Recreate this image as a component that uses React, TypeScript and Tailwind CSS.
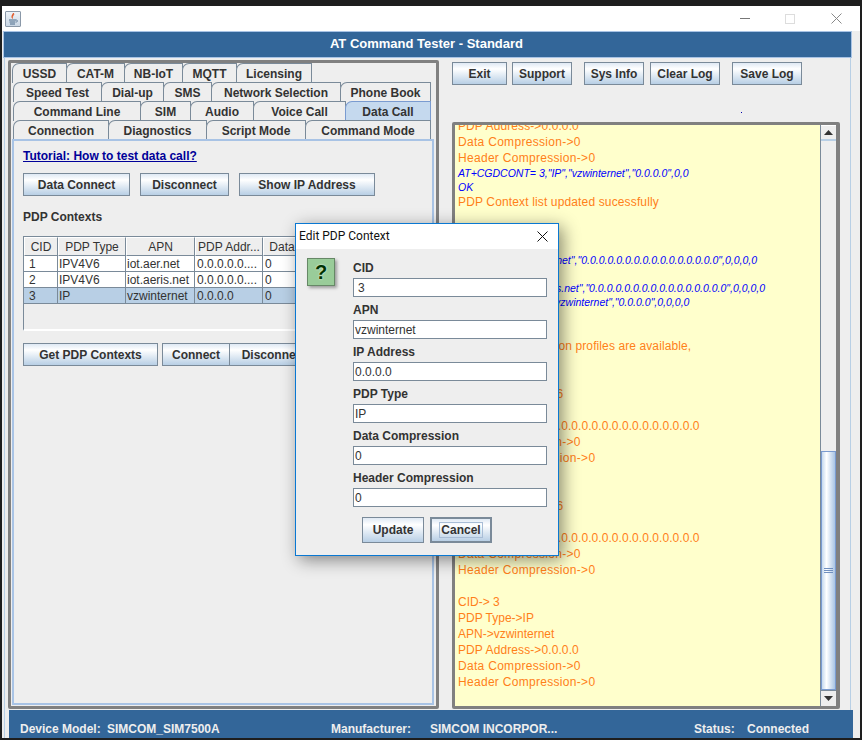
import React from "react";

const btn =
  "h-[23px] shrink-0 flex items-center justify-center border border-[#7a8a99] bg-[linear-gradient(180deg,#dfe9f4_0%,#ffffff_28%,#b8cfe5_100%)] text-[12px] font-bold text-[#333333]";

function Btn({ w, children, className = "" }: { w: string; children: React.ReactNode; className?: string }) {
  return <div className={`${btn} ${w} ${className}`}>{children}</div>;
}

function Tab({ w, label, active }: { w: number; label: string; active?: boolean }) {
  return (
    <div
      style={{ width: w }}
      className={`h-[20px] -mr-px shrink-0 flex items-center justify-center rounded-tl-[7px] border border-b-0 text-[12px] font-bold text-[#333333] ${
        active ? "bg-[#c5d9ee] border-[#7a9bd0]" : "bg-[#eeeeee] border-[#7a8a99]"
      }`}
    >
      {label}
    </div>
  );
}

const rows: { l: number; items: [string, number, boolean?][] }[] = [
  { l: 0, items: [["USSD", 54], ["CAT-M", 58], ["NB-IoT", 58], ["MQTT", 54], ["Licensing", 75]] },
  { l: 1, items: [["Speed Test", 88], ["Dial-up", 62], ["SMS", 48], ["Network Selection", 129], ["Phone Book", 90]] },
  { l: 1, items: [["Command Line", 127], ["SIM", 50], ["Audio", 63], ["Voice Call", 92], ["Data Call", 85, true]] },
  { l: 1, items: [["Connection", 95], ["Diagnostics", 98], ["Script Mode", 99], ["Command Mode", 125]] },
];

const cols = [
  { w: "w-[34px]", h: "CID", v: ["1", "2", "3"], p: "pl-[5px]" },
  { w: "w-[68px]", h: "PDP Type", v: ["IPV4V6", "IPV4V6", "IP"], p: "pl-[1px]" },
  { w: "w-[69px]", h: "APN", v: ["iot.aer.net", "iot.aeris.net", "vzwinternet"], p: "pl-[1px]" },
  { w: "w-[68px]", h: "PDP Addr...", v: ["0.0.0.0.0....", "0.0.0.0.0....", "0.0.0.0"], p: "pl-[2px]" },
  { w: "w-[38px]", h: "Data", v: ["0", "0", "0"], p: "pl-[2px]" },
  { w: "w-[68px]", h: "Header", v: ["0", "0", "0"], p: "pl-[2px]" },
  { w: "flex-1", h: "", v: ["", "", ""], p: "" },
];

function Table() {
  return (
    <div className="mt-[11px] mr-[9px] h-[95px] flex flex-col border-l border-t border-[#7a8a99] border-b-2 border-b-[#ffffff] bg-[#eeeeee]">
      <div className="h-[19px] shrink-0 flex">
        {cols.map((c) => (
          <div
            key={c.h}
            className={`${c.w} shrink-0 flex items-center justify-center border-r border-b border-[#7a8a99] border-t border-l border-t-[#ffffff] border-l-[#ffffff] text-[12px] text-[#333333]`}
          >
            {c.h}
          </div>
        ))}
      </div>
      {[0, 1, 2].map((j) => (
        <div key={j} className={`h-[16px] shrink-0 flex border-b border-[#7a8a99] ${j === 2 ? "bg-[#b8cfe5]" : "bg-[#ffffff]"}`}>
          {cols.map((c) => (
            <div
              key={c.h}
              className={`${c.w} shrink-0 flex items-center whitespace-nowrap overflow-hidden border-r border-[#7a8a99] text-[12px] text-[#333333] ${c.p}`}
            >
              {c.v[j]}
            </div>
          ))}
        </div>
      ))}
    </div>
  );
}

const O = ({ t, c = "" }: { t?: string; c?: string }) => (
  <div className={`h-[16px] leading-[16px] text-[12px] whitespace-nowrap text-[#ff8019] ${c}`}>{t}</div>
);
const B = ({ t, c = "" }: { t?: string; c?: string }) => (
  <div className={`h-[14px] leading-[14px] text-[10.5px] italic whitespace-nowrap text-[#0000ff] ${c}`}>{t}</div>
);

const ADDR = "0.0.0.0.0.0.0.0.0.0.0.0.0.0.0.0";
const WIDE = "tracking-[0.3px]";

function LogText() {
  return (
    <div className="flex-1 min-w-0 overflow-hidden pl-[3px] bg-[#ffffcc]">
      <div className="-mt-[7px]">
        <O t="PDP Address->0.0.0.0" c="tracking-[0.1px]" />
        <O t="Data Compression->0" c={WIDE} />
        <O t="Header Compression->0" c={WIDE} />
        <B t={'AT+CGDCONT= 3,"IP","vzwinternet","0.0.0.0",0,0'} />
        <B t="OK" />
        <O t="PDP Context list updated sucessfully" c="tracking-[0.14px]" />
        <div className="h-[43px]" />
        <B t={`1,"IPV4V6","iot.aer.net","${ADDR}",0,0,0,0`} c="pl-[8px]" />
        <B />
        <B t={`2,"IPV4V6","iot.aeris.net","${ADDR}",0,0,0,0`} c="pl-[8px]" />
        <B t={'+CGDCONT: 3,"IP","vzwinternet","0.0.0.0",0,0,0,0'} />
        <div className="h-[29px]" />
        <O t="Following connection profiles are available," c="tracking-[0.1px]" />
        <O />
        <O t="CID-> 1" />
        <O t="PDP Type->IPV4V6" />
        <O t="APN->iot.aer.net" />
        <O t={`PDP Address->${ADDR}`} c="tracking-[0.06px]" />
        <O t="Data Compression->0" c={WIDE} />
        <O t="Header Compression->0" c={WIDE} />
        <O />
        <O t="CID-> 2" />
        <O t="PDP Type->IPV4V6" />
        <O t="APN->iot.aeris.net" />
        <O t={`PDP Address->${ADDR}`} c="tracking-[0.06px]" />
        <O t="Data Compression->0" c={WIDE} />
        <O t="Header Compression->0" c={WIDE} />
        <O />
        <O t="CID-> 3" />
        <O t="PDP Type->IP" />
        <O t="APN->vzwinternet" />
        <O t="PDP Address->0.0.0.0" c="tracking-[0.1px]" />
        <O t="Data Compression->0" c={WIDE} />
        <O t="Header Compression->0" c={WIDE} />
      </div>
    </div>
  );
}

function Scrollbar() {
  return (
    <div className="w-[16px] shrink-0 flex flex-col border-l border-[#7a8a99] bg-[#eeeeee]">
      <div className="h-[16px] shrink-0 flex items-center justify-center border-b-2 border-[#b8cfe5] border-t border-t-[#ffffff]">
        <svg width="9" height="5" viewBox="0 0 9 5"><path d="M4.5 0 9 5H0z" fill="#333333" /></svg>
      </div>
      <div className="h-[310px] shrink-0" />
      <div className="flex-1 flex items-center justify-center border border-[#7a9bd0] bg-[linear-gradient(90deg,#c5d9ee_0%,#ffffff_35%,#a8c4e4_100%)]">
        <div className="flex flex-col gap-[1px]">
          <div className="w-[9px] h-px bg-[#6f8fc0]" />
          <div className="w-[9px] h-px bg-[#6f8fc0]" />
          <div className="w-[9px] h-px bg-[#6f8fc0]" />
        </div>
      </div>
      <div className="h-[16px] shrink-0 flex items-center justify-center border-t border-[#7a8a99]">
        <svg width="9" height="5" viewBox="0 0 9 5"><path d="M0 0h9L4.5 5z" fill="#333333" /></svg>
      </div>
    </div>
  );
}

function Field({ label, value, pad = "pl-[1px]" }: { label: string; value: string; pad?: string }) {
  return (
    <div className="flex flex-col">
      <div className="h-[23px] pt-[2px] flex items-center text-[12px] font-bold text-[#333333]">{label}</div>
      <div className={`h-[19px] flex items-center pt-px border border-[#7a8a99] bg-[#ffffff] text-[12px] text-[#333333] ${pad}`}>
        {value}
      </div>
    </div>
  );
}

function Dialog() {
  return (
    <div className="absolute left-[295px] top-[223px] w-[264px] h-[333px] flex flex-col border border-[#0a78d2] bg-[#eeeeee] shadow-[4px_4px_16px_rgba(0,0,0,0.45)]">
      <div className="h-[25px] shrink-0 flex items-center justify-between bg-[#ffffff] pl-[3px] pr-[10px] pb-px">
        <span className="text-[12px] text-[#111111] font-['Roboto',sans-serif]">Edit PDP Context</span>
        <svg width="11" height="11" viewBox="0 0 11 11" fill="none" stroke="#111111" strokeWidth="1">
          <path d="M0.5 0.5l10 10M10.5 0.5l-10 10" />
        </svg>
      </div>
      <div className="flex pl-[11px]">
        <div className="mt-[9px] w-[28px] h-[28px] shrink-0 flex items-center justify-center border border-[#668866] bg-[#99cc99] shadow-[2px_2px_3px_rgba(0,0,0,0.35)]">
          <span className="text-[20px] leading-[20px] font-black text-[#003300] [text-shadow:0_0_2px_#ffffff]">?</span>
        </div>
        <div className="ml-[18px] w-[194px] flex flex-col mt-[6px]">
          <Field label="CID" value="3" pad="pl-[4px]" />
          <Field label="APN" value="vzwinternet" />
          <Field label="IP Address" value="0.0.0.0" />
          <Field label="PDP Type" value="IP" />
          <Field label="Data Compression" value="0" />
          <Field label="Header Compression" value="0" />
        </div>
      </div>
      <div className="mt-[10px] flex pl-[66px] gap-[6px]">
        <Btn w="w-[62px]" className="h-[26px]">Update</Btn>
        <div className="w-[62px] h-[26px] flex items-center justify-center border-2 border-[#7a8a99] bg-[linear-gradient(180deg,#dfe9f4_0%,#ffffff_28%,#b8cfe5_100%)] text-[12px] font-bold text-[#333333]">
          <span className="px-[1px] border border-[#a8bdd6] leading-[14px]">Cancel</span>
        </div>
      </div>
    </div>
  );
}

function JavaIcon() {
  return (
    <div className="ml-[3px] w-[16px] h-[16px] flex items-center justify-center border border-[#8a98a8] rounded-[1px] bg-[linear-gradient(180deg,#eef3f8,#c9d6e4)]">
      <svg width="12" height="14" viewBox="0 0 12 14" fill="none">
        <path d="M6.5 1C8 3 4.5 4 5.5 6.5 4 5 5 3 6.5 1z" fill="#e0501e" stroke="#e0501e" strokeWidth="0.6" />
        <path d="M2 8h7M2.5 10h6M3 12h5" stroke="#4a6a8a" strokeWidth="1" />
        <path d="M9 8c2 0 2 2 0 2" stroke="#4a6a8a" strokeWidth="0.8" />
      </svg>
    </div>
  );
}

export default function App() {
  return (
    <div className="relative w-[862px] h-[740px] overflow-hidden bg-[#1e1e1e] pt-[6px] pl-[2px] pr-[2px] pb-[2px] font-['Liberation_Sans',Arial,sans-serif]">
      <div className="h-full flex flex-col bg-[#eeeeee]">
        <div className="h-[25px] shrink-0 flex items-center justify-between bg-[#ffffff] pr-[18px]">
          <JavaIcon />
          <div className="flex items-center">
            <div className="w-[10px] h-px bg-[#777777]" />
            <div className="ml-[35px] w-[10px] h-[10px] border border-[#dddddd]" />
            <svg className="ml-[36px]" width="11" height="11" viewBox="0 0 11 11" fill="none" stroke="#888888" strokeWidth="1">
              <path d="M0.5 0.5l10 10M10.5 0.5l-10 10" />
            </svg>
          </div>
        </div>
        <div className="flex-1 min-h-0 flex flex-col pl-px pr-[8px]">
          <div className="h-[27px] shrink-0 flex items-center justify-center pb-px pr-[2px] border border-[#a8c3e5] bg-[#336699] text-[13px] font-bold text-[#ffffff]">
            AT Command Tester - Standard
          </div>
          <div className="flex-1 min-h-0 ml-px mr-[1px] flex flex-col border-x border-[#b8cfe5]">
            <div className="flex-1 min-h-0 flex pl-[3px] pt-[2px] pb-px">
              <div className="w-[431px] shrink-0 flex flex-col border-[3px] border-[#808080] rounded-[2px] pl-px pr-[2px] pb-[1px]">
                <div className="flex flex-col">
                  {rows.map((r, i) => (
                    <div key={i} className="flex h-[19px]" style={{ paddingLeft: r.l }}>
                      {r.items.map(([label, w, a]) => (
                        <Tab key={label} label={label} w={w + 1} active={a} />
                      ))}
                    </div>
                  ))}
                </div>
                <div className="flex-1 min-h-0 flex flex-col border-2 border-[#a8c3e5] pl-[9px] pt-[7px]">
                  <div className="h-[16px] flex items-center text-[12px] font-bold text-[#000099] underline">
                    Tutorial: How to test data call?
                  </div>
                  <div className="mt-[9px] flex gap-[10px]">
                    <Btn w="w-[107px]">Data Connect</Btn>
                    <Btn w="w-[89px]">Disconnect</Btn>
                    <Btn w="w-[136px]">Show IP Address</Btn>
                  </div>
                  <div className="mt-[13px] h-[16px] flex items-center text-[12px] font-bold text-[#333333]">PDP Contexts</div>
                  <Table />
                  <div className="mt-[12px] flex">
                    <Btn w="w-[135px]">Get PDP Contexts</Btn>
                    <Btn w="w-[68px]" className="ml-[4px]">Connect</Btn>
                    <Btn w="w-[90px]" className="-ml-px">Disconnect</Btn>
                  </div>
                </div>
              </div>
              <div className="ml-[13px] w-[388px] shrink-0 flex flex-col">
                <div className="mt-[2px] flex">
                  <Btn w="w-[55px]">Exit</Btn>
                  <Btn w="w-[60px]" className="ml-[5px]">Support</Btn>
                  <Btn w="w-[60px]" className="ml-[12px]">Sys Info</Btn>
                  <Btn w="w-[70px]" className="ml-[6px]">Clear Log</Btn>
                  <Btn w="w-[70px]" className="ml-[12px]">Save Log</Btn>
                </div>
                <div className="ml-[289px] mt-[27px] w-px h-px bg-[#0000aa]" />
                <div className="mt-[9px] flex-1 min-h-0 flex border-[3px] border-r-[4px] border-[#808080] rounded-[2px] overflow-hidden">
                  <LogText />
                  <Scrollbar />
                </div>
              </div>
            </div>
            <div className="h-[28px] shrink-0 ml-[4px] -mr-[3px] flex items-end pl-[11px] pb-px bg-[#336699] text-[12px] font-bold text-[#eeeeee] whitespace-nowrap">
              <span className="w-[87px] h-[16px] leading-[16px]">Device Model:</span>
              <span className="w-[224px] h-[16px] leading-[16px]">SIMCOM_SIM7500A</span>
              <span className="w-[99px] h-[16px] leading-[16px]">Manufacturer:</span>
              <span className="w-[264px] h-[16px] leading-[16px]">SIMCOM INCORPOR...</span>
              <span className="w-[53px] h-[16px] leading-[16px]">Status:</span>
              <span className="h-[16px] leading-[16px]">Connected</span>
            </div>
          </div>
        </div>
      </div>
      <Dialog />
    </div>
  );
}
